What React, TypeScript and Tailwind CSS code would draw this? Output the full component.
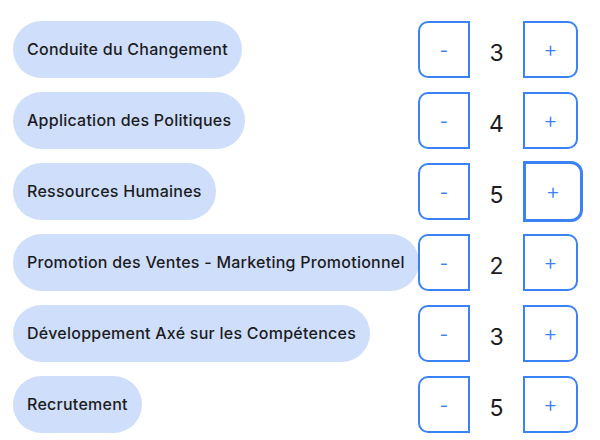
import React from "react";

const items = [
  { label: "Conduite du Changement", value: 3 },
  { label: "Application des Politiques", value: 4 },
  { label: "Ressources Humaines", value: 5, focused: true },
  { label: "Promotion des Ventes - Marketing Promotionnel", value: 2 },
  { label: "Développement Axé sur les Compétences", value: 3 },
  { label: "Recrutement", value: 5 },
];

export default function App() {
  return (
    <div
      className="w-[600px] h-[440px] bg-white pt-[21px] pl-[13px] flex flex-col gap-[14px]"
      style={{ fontFamily: "Inter, 'Noto Sans', sans-serif" }}
    >
      {items.map((it) => (
        <div key={it.label} className="flex items-center h-[57px]">
          <div className="w-[405px] flex">
            <div className="h-[57px] rounded-full bg-[#cfdffb] px-[14px] pb-[1px] flex items-center text-[16px] tracking-[0.25px] font-medium text-[#1c1c1e] whitespace-nowrap">
              {it.label}
            </div>
          </div>
          <div className="flex items-center">
            <div className="w-[52px] h-[57px] border-2 border-[#3b82f6] rounded-tl-[10px] rounded-bl-[10px] text-[#3b82f6] text-[18px] flex items-center justify-center bg-white pt-[2px]">
              -
            </div>
            <div className="w-[53px] text-center text-[23px] text-[#1c1c1e] pt-[7px]">{it.value}</div>
            {it.focused ? (
              <div className="w-[60px] h-[61px] -mr-[4px] border-[3.5px] border-[#3b82f6] rounded-tr-[12px] rounded-br-[12px] text-[#3b82f6] text-[22px] font-light flex items-center justify-center bg-white">
                +
              </div>
            ) : (
              <div className="w-[55px] h-[57px] border-2 border-[#3b82f6] rounded-tr-[10px] rounded-br-[10px] text-[#3b82f6] text-[22px] font-light flex items-center justify-center bg-white">
                +
              </div>
            )}
          </div>
        </div>
      ))}
    </div>
  );
}
